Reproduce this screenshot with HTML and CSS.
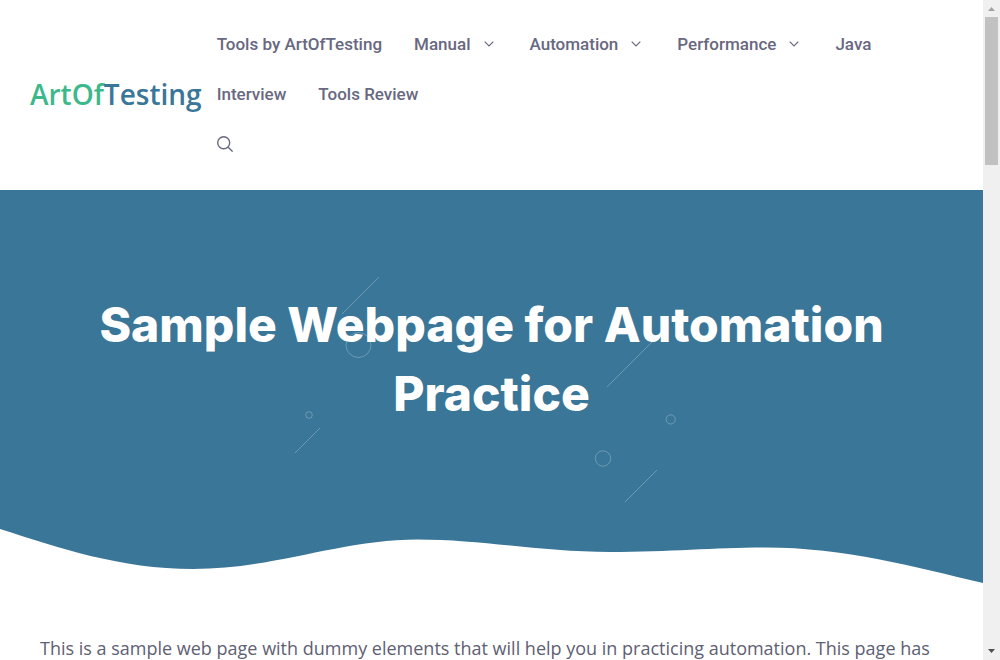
FILE: index.html
```html
<!DOCTYPE html>
<html lang="en">
<head>
<meta charset="utf-8">
<meta name="viewport" content="width=device-width, initial-scale=1">
<title>Sample Webpage for Automation Practice</title>
<link rel="stylesheet" href="styles.css">
</head>
<body>
<div class="viewport">
  <div class="page">
    <header class="site-header">
      <a class="logo" href="#"><span class="logo-accent">ArtOf</span>Testing</a>
      <nav class="nav" aria-label="Primary">
        <ul class="menu">
          <li><a href="#">Tools by ArtOfTesting</a></li>
          <li><a href="#">Manual<svg class="chevron" viewBox="0 0 10 6" aria-hidden="true"><path d="M.7 .7L5 5L9.300 .7"/></svg></a></li>
          <li><a href="#">Automation<svg class="chevron" viewBox="0 0 10 6" aria-hidden="true"><path d="M.7 .7L5 5L9.300 .7"/></svg></a></li>
          <li><a href="#">Performance<svg class="chevron" viewBox="0 0 10 6" aria-hidden="true"><path d="M.7 .7L5 5L9.300 .7"/></svg></a></li>
          <li><a href="#">Java</a></li>
          <li><a href="#">Interview</a></li>
          <li><a href="#">Tools Review</a></li>
        </ul>
        <button class="search" type="button" aria-label="Open search">
          <svg viewBox="0 0 16 16" aria-hidden="true"><circle cx="6.7" cy="6.7" r="6"/><path d="M11 11l4.600 4.600"/></svg>
        </button>
      </nav>
    </header>
    <section class="hero">
      <svg class="hero-shapes" viewBox="0 0 376 226" aria-hidden="true">
        <path d="M84 1L47 38M25 152L0 177M361 62L312 111M362 194L330 226"/>
        <circle cx="63.5" cy="69" r="12.5"/>
        <circle cx="14" cy="139" r="3.3"/>
        <circle cx="375.700" cy="143.400" r="4.600"/>
        <circle cx="308" cy="182.500" r="7.700"/>
      </svg>
      <h1 class="hero-title">Sample Webpage for Automation Practice</h1>
      <svg class="wave" viewBox="0 0 983 56" preserveAspectRatio="none" aria-hidden="true"><path d="M0 1C60 20 120 41 193 41C275 41 340 11.500 418 11.500C482 11.500 540 24 610 24C670 24 715 19.500 765 19.500C845 19.500 915 39 983 55V56H0Z"/></svg>
    </section>
    <main class="content">
      <p>This is a sample web page with dummy elements that will help you in practicing automation. This page has</p>
    </main>
  </div>
  <div class="scrollbar" aria-hidden="true">
    <svg class="arrow arrow-up" viewBox="0 0 7 4"><path d="M0 4h7L3.500 0z"/></svg>
    <div class="thumb"></div>
    <svg class="arrow" viewBox="0 0 7 4"><path d="M0 0h7L3.500 4z"/></svg>
  </div>
</div>
</body>
</html>
```
FILE: styles.css
```css
* { box-sizing: border-box; }

body {
  margin: 0;
  background: #fff;
  color: #5e6073;
  font-family: Roboto, "Liberation Sans", sans-serif;
}

.viewport {
  display: flex;
  height: 100vh;
  overflow: hidden;
}

.page {
  flex: 1;
  min-width: 0;
}

.site-header {
  display: flex;
  align-items: center;
  gap: 15px;
  padding: 19px 30px 21px;
}

.logo {
  flex: none;
  color: #3a7698;
  font: 600 28px/50px "Open Sans", "Noto Sans", sans-serif;
  text-decoration: none;
}

.logo-accent { color: #3db88b; }

.nav { flex: 1; }

.menu {
  display: flex;
  flex-wrap: wrap;
  column-gap: 32px;
  margin: 0;
  padding: 0;
  list-style: none;
}

.menu a {
  display: flex;
  align-items: center;
  gap: 13px;
  color: #686880;
  font-size: 17px;
  font-weight: 500;
  line-height: 50px;
  text-decoration: none;
}

.chevron {
  width: 10px;
  height: 6px;
  margin-right: 4px;
  fill: none;
  stroke: currentColor;
  stroke-width: 1.2;
}

.search {
  display: flex;
  align-items: center;
  height: 50px;
  padding: 0;
  border: 0;
  background: none;
  color: #686880;
}

.search svg {
  width: 16px;
  height: 16px;
  fill: none;
  stroke: currentColor;
  stroke-width: 1.4;
}

.hero {
  position: relative;
  padding-top: 100px;
  background: #3a7698;
  color: #fff;
}

.hero-shapes {
  position: absolute;
  top: 86px;
  left: 30%;
  width: 376px;
  height: 226px;
  overflow: visible;
  fill: none;
  stroke: #fff;
  stroke-opacity: 0.25;
}

.hero-title {
  position: relative;
  margin: 0;
  padding: 0 40px 100px;
  font: 800 48px/69px Inter, sans-serif;
  text-align: center;
}

.wave {
  display: block;
  width: 100%;
  height: 56px;
  fill: #fff;
}

.content { padding: 48px 40px; }

.content p {
  margin: 0;
  font-family: "Open Sans", sans-serif;
  font-size: 18px;
  line-height: 32px;
  white-space: nowrap;
}

.scrollbar {
  display: flex;
  flex-direction: column;
  align-items: center;
  width: 17px;
  padding: 7px 2px;
  background: #f0f0f0;
}

.thumb {
  width: 13px;
  height: 148px;
  margin: 6px 0 auto;
  background: #c1c1c1;
}

.arrow {
  width: 7px;
  height: 4px;
  fill: #505050;
}

.arrow-up { fill: #a3a3a3; }
```
